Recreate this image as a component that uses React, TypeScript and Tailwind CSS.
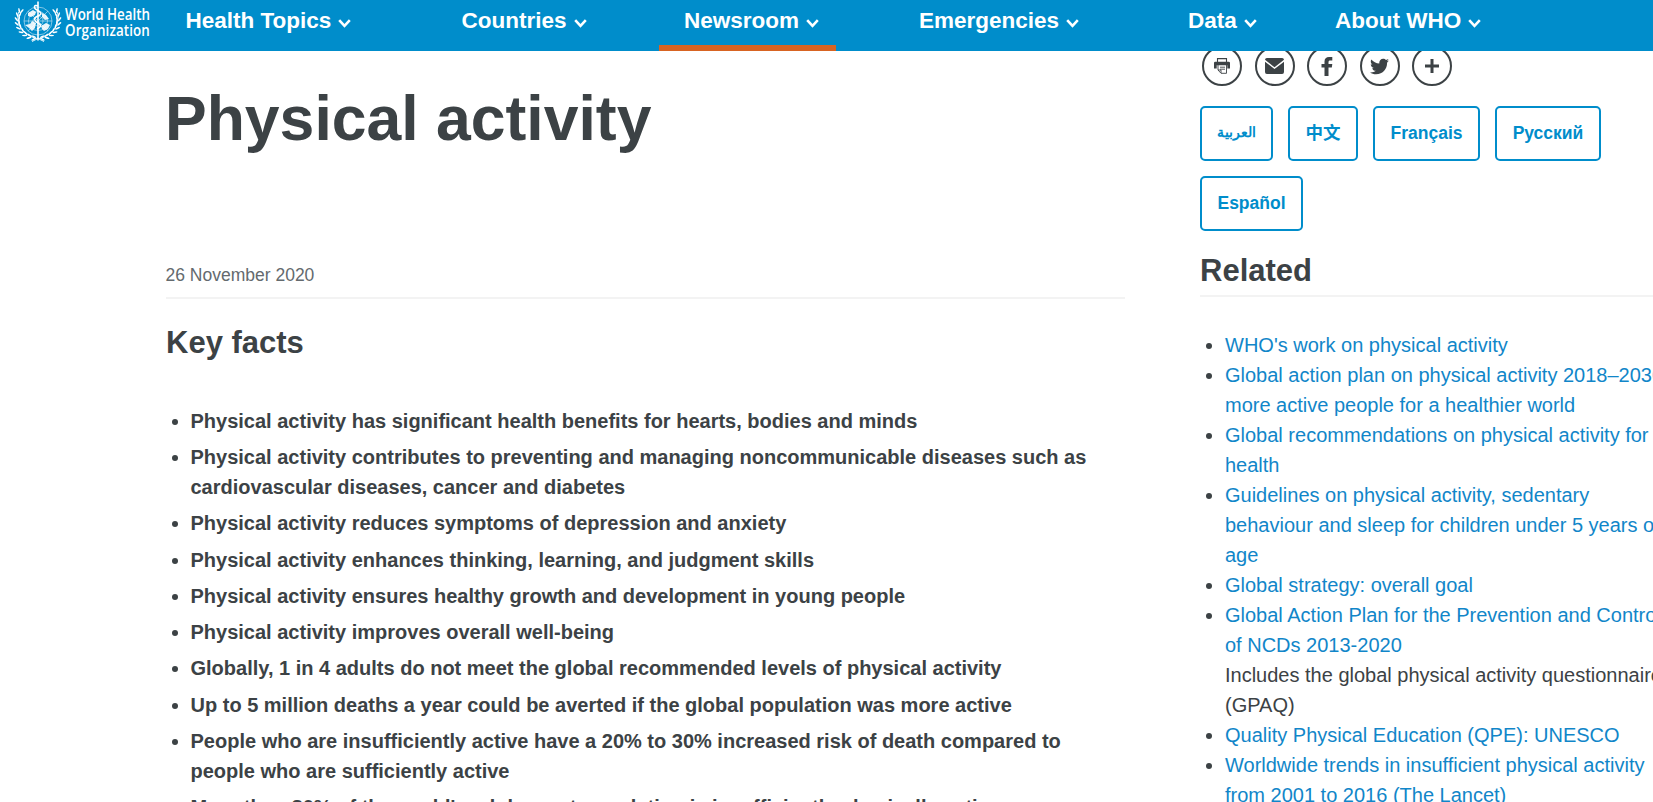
import { FaFacebookF, FaTwitter } from "react-icons/fa";

const navItems = [
  { label: "Health Topics", width: "w-[276px]" },
  { label: "Countries", width: "w-[198px]" },
  { label: "Newsroom", width: "w-[177px]", active: true },
  { label: "Emergencies", width: "w-[269px]" },
  { label: "Data", width: "w-[147px]" },
  { label: "About WHO", width: "w-[200px]" },
];

const facts = [
  "Physical activity has significant health benefits for hearts, bodies and minds",
  "Physical activity contributes to preventing and managing noncommunicable diseases such as cardiovascular diseases, cancer and diabetes",
  "Physical activity reduces symptoms of depression and anxiety",
  "Physical activity enhances thinking, learning, and judgment skills",
  "Physical activity ensures healthy growth and development in young people",
  "Physical activity improves overall well-being",
  "Globally, 1 in 4 adults do not meet the global recommended levels of physical activity",
  "Up to 5 million deaths a year could be averted if the global population was more active",
  "People who are insufficiently active have a 20% to 30% increased risk of death compared to people who are sufficiently active",
  "More than 80% of the world's adolescent population is insufficiently physically active",
];

const related: { lines: string[]; note?: string[] }[] = [
  { lines: ["WHO's work on physical activity"] },
  { lines: ["Global action plan on physical activity 2018–2030:", "more active people for a healthier world"] },
  { lines: ["Global recommendations on physical activity for", "health"] },
  { lines: ["Guidelines on physical activity, sedentary", "behaviour and sleep for children under 5 years of", "age"] },
  { lines: ["Global strategy: overall goal"] },
  {
    lines: ["Global Action Plan for the Prevention and Control", "of NCDs 2013-2020"],
    note: ["Includes the global physical activity questionnaire", "(GPAQ)"],
  },
  { lines: ["Quality Physical Education (QPE): UNESCO"] },
  { lines: ["Worldwide trends in insufficient physical activity", "from 2001 to 2016 (The Lancet)"] },
];

function Chevron() {
  return (
    <svg className="mt-[4px] ml-[7px] h-[9px] w-[13px]" viewBox="0 0 13 9" fill="none" stroke="white" strokeWidth="2.6">
      <path d="M1.2 1.2 6.5 6.8 11.8 1.2" />
    </svg>
  );
}

function Emblem() {
  const leaves = [0, 1, 2, 3, 4, 5, 6, 7, 8];
  return (
    <svg className="h-[43px] w-[48px] shrink-0" viewBox="0 0 48 43" fill="none" stroke="white">
      <g strokeWidth="0.6" opacity="0.85">
        <circle cx="24" cy="21" r="14" />
        <circle cx="24" cy="21" r="9.5" />
        <circle cx="24" cy="21" r="5" />
        <path d="M10 21h28M14.1 11.1l19.800 19.800M33.900 11.1 14.100 30.900" />
      </g>
      <g fill="white" stroke="none" opacity="0.9">
        <path d="M14 13l5-3 3 2-1 3-4 2-3-1zM11 25l5-1 2-3 4 2-1 5-3 3-3-3zM27 26l5-3 4 2-2 4-4 2-2-2zM28 13l4 2 3 4-4 1-3-3z" />
      </g>
      <path d="M24 1.500v39" strokeWidth="1.600" />
      <path d="M24 6c-4-2-5 2-1 4s6 4 1 6-4 5 0 7 3 4-1 6" strokeWidth="1.500" />
      {[1, -1].map((s) => (
        <g key={s} transform={s === 1 ? undefined : "translate(48 0) scale(-1 1)"}>
          <path d="M4.500 12C2 24 8 35 23 38.500M18 41.500l7-3.500" strokeWidth="0.900" />
          {leaves.map((i) => {
            const a = ((212 - i * 13.5) * Math.PI) / 180;
            const x = 24 + 20.5 * Math.cos(a);
            const y = 20 + 18.5 * Math.sin(a);
            return (
              <g key={i} transform={`translate(${x} ${y}) rotate(${-75 - i * 13.5})`}>
                <ellipse cx="0" cy="1.500" rx="2.600" ry="0.800" fill="white" stroke="none" transform="rotate(25)" />
                <ellipse cx="0" cy="-1.500" rx="2.600" ry="0.800" fill="white" stroke="none" transform="rotate(-25)" />
              </g>
            );
          })}
        </g>
      ))}
    </svg>
  );
}

function Printer() {
  return (
    <svg className="h-[16px] w-[16px]" viewBox="0 0 16 16" fill="none" stroke="#3c4245">
      <path d="M3.500 4V.6h9V4" strokeWidth="1.1" />
      <path d="M0 5a1.3 1.3 0 0 1 1.300-1.300h13.400A1.300 1.300 0 0 1 16 5v5.500h-2.700V7.200H2.700v3.300H0z" fill="#3c4245" stroke="none" />
      <path d="M4 7v5l3 3.300h5.500V7M6 9.200h5M6 11.200h5M4 12h3v3" strokeWidth="0.900" />
    </svg>
  );
}

function Envelope() {
  return (
    <svg className="h-[16px] w-[19px]" viewBox="0 0 20 16" preserveAspectRatio="none" fill="#3c4245">
      <path d="M2 0h16a2 2 0 0 1 2 1.800L10 9.200 0 1.800A2 2 0 0 1 2 0z" />
      <path d="M0 3.800l10 7.200 10-7.200V14a2 2 0 0 1-2 2H2a2 2 0 0 1-2-2z" />
    </svg>
  );
}

function Plus() {
  return (
    <svg className="h-[14px] w-[14px]" viewBox="0 0 14 14" stroke="#3c4245" strokeWidth="3">
      <path d="M7 0v14M0 7h14" />
    </svg>
  );
}

const shares = [
  <Printer key="print" />,
  <Envelope key="mail" />,
  <svg key="fb" className="h-[19px] w-[12px]" viewBox="0 0 12 19" fill="#3c4245">
    <path d="M3.500 19v-8.500H.5V7h3V4.600C3.500 1.600 5.200 0 8 0h3.300v3.400H9.200C8 3.400 7.500 4 7.500 5v2h3.800l-.5 3.500H7.500V19z" />
  </svg>,
  <FaTwitter key="tw" className="h-[19px] w-[19px]" />,
  <Plus key="plus" />,
];

const languages = [
  { label: "العربية", box: "w-[73px] text-[14px] font-bold pb-[3px]", dir: "rtl" },
  { label: "中文", box: "w-[70px] text-[17.5px] font-bold" },
  { label: "Français", box: "w-[107px] text-[17.5px] font-bold" },
  { label: "Русский", box: "w-[106px] text-[17.5px] font-bold" },
  { label: "Español", box: "w-[103px] text-[17.5px] font-bold" },
];

export default function App() {
  return (
    <div className="h-[802px] w-[1653px] overflow-hidden bg-white font-['Liberation_Sans','Noto_Sans_CJK_SC',sans-serif] text-[#3c4245]">
      <header className="relative z-10 flex h-[51px] bg-[#008dcb] text-white">
        <div className="flex w-[185.5px] shrink-0 pl-[13.5px]">
          <Emblem />
          <div className="mt-[6px] ml-[3px] flex origin-left scale-x-[0.835] flex-col font-['Open_Sans',sans-serif] text-[16px] leading-[16px] font-semibold whitespace-nowrap">
            <span>World Health</span>
            <span className="tracking-[0.15px]">Organization</span>
          </div>
        </div>
        <nav className="flex">
          {navItems.map((item) => (
            <a
              key={item.label}
              className={`${item.width} flex h-[51px] items-start pt-[8px] text-[22.5px] leading-[26px] font-bold whitespace-nowrap ${
                item.active ? "mr-[83px] ml-[-0.500px] border-b-[6px] border-[#d86422] pl-[25px]" : ""
              }`}
            >
              {item.label}
              <span className="flex h-[26px] items-center">
                <Chevron />
              </span>
            </a>
          ))}
        </nav>
      </header>

      <div className="flex">
        <main className="ml-[166px] w-[959px] shrink-0">
          <h1 className="mt-[31px] ml-[-1px] text-[62.5px] leading-[72px] font-bold">Physical activity</h1>
          <div className="mt-[109px] ml-[-0.500px] h-[36px] border-b-2 border-[#f3f3f3] text-[17.5px] leading-[24px] text-[#646a6e]">26 November 2020</div>
          <h2 className="mt-[26px] text-[31px] leading-[36px] font-bold">Key facts</h2>
          <ul className="mt-[44.8px] ml-[24.500px] list-disc text-[20px] leading-[30px] font-bold">
            {facts.map((fact) => (
              <li key={fact} className="mb-[6.25px]">
                {fact}
              </li>
            ))}
          </ul>
        </main>

        <aside className="ml-[75px] w-[453px] shrink-0">
          <div className="mt-[-5px] ml-[2px] flex gap-[12.5px]">
            {shares.map((icon, i) => (
              <div key={i} className="flex size-[40px] items-center justify-center rounded-full border-2 border-[#3c4245]">
                {icon}
              </div>
            ))}
          </div>
          <div className="mt-[20px] flex flex-wrap gap-[15px]">
            {languages.map((l) => (
              <div
                key={l.label}
                dir={l.dir}
                className={`${l.box} flex h-[55px] items-center justify-center rounded-[5px] border-2 border-[#008dcb] text-[#008dcb]`}
              >
                {l.label}
              </div>
            ))}
          </div>
          <h2 className="mt-[22px] h-[44px] border-b-2 border-[#f3f3f3] text-[31px] leading-[36px] font-bold">Related</h2>
          <ul className="mt-[33px] ml-[25px] list-disc text-[20px] leading-[30px] whitespace-nowrap">
            {related.map((r) => (
              <li key={r.lines[0]}>
                {r.lines.map((line) => (
                  <a key={line} className="block text-[#1186c9]">
                    {line}
                  </a>
                ))}
                {r.note?.map((line) => (
                  <span key={line} className="block">
                    {line}
                  </span>
                ))}
              </li>
            ))}
          </ul>
        </aside>
      </div>
    </div>
  );
}
